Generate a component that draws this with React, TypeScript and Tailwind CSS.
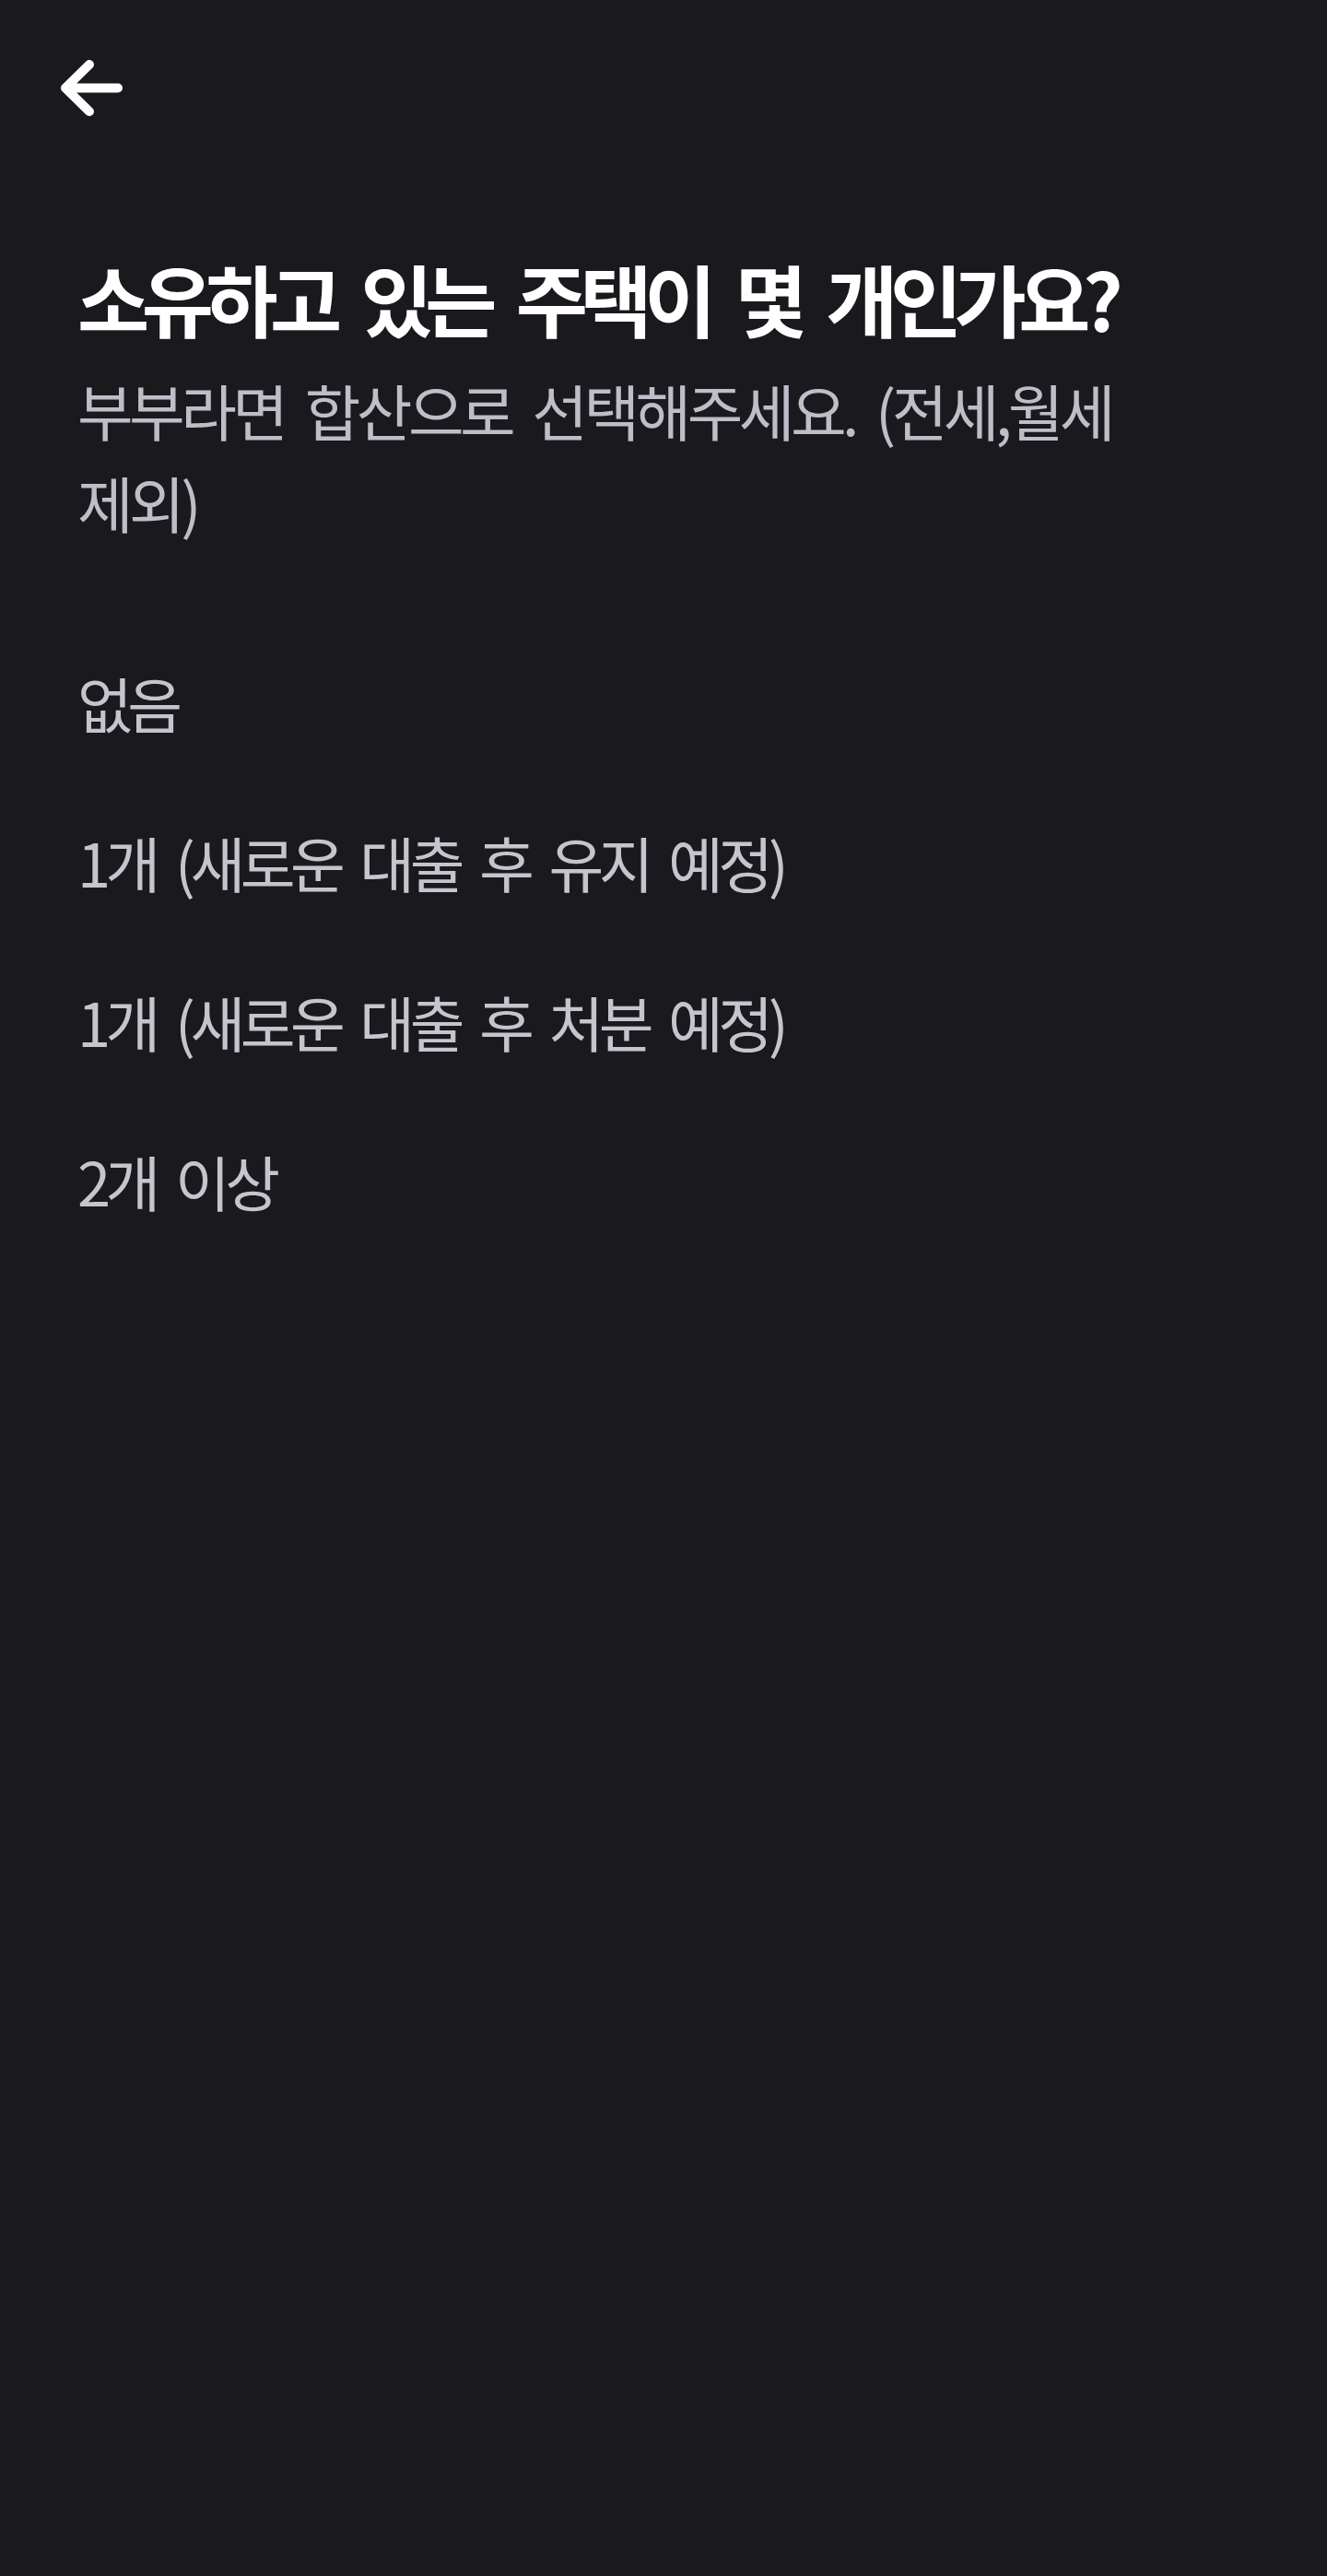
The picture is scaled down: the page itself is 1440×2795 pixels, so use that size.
import React from "react";

const options = [
  "없음",
  "1개 (새로운 대출 후 유지 예정)",
  "1개 (새로운 대출 후 처분 예정)",
  "2개 이상",
];

export default function App() {
  return (
    <div
      className="min-h-screen w-full bg-[#19191e] text-white"
      style={{ fontFamily: '"Noto Sans CJK KR", "Noto Sans", sans-serif' }}
    >
      <header className="pt-[60px] pl-[61px]">
        <button type="button" aria-label="뒤로 가기" className="block">
          <svg width="76" height="70" viewBox="0 0 76 70" fill="none">
            <path
              d="M36 10 L10 35.5 L36 61 M10 35.5 H67"
              stroke="white"
              strokeWidth="10"
              strokeLinecap="round"
              strokeLinejoin="round"
            />
          </svg>
        </button>
      </header>

      <main className="px-[84px]">
        <h1 className="mt-[140px] text-[85px] font-bold leading-[106px] tracking-[-8.5px] [word-spacing:18px] text-white whitespace-nowrap">
          소유하고 있는 주택이 몇 개인가요?
        </h1>
        <p className="mt-[18px] text-[66px] leading-[100px] tracking-[-4.6px] [word-spacing:12px] text-[#bdbec7] whitespace-nowrap">
          부부라면 합산으로 선택해주세요. (전세,월세
          <br />
          제외)
        </p>

        <ul className="mt-[82px] flex flex-col">
          {options.map((o) => (
            <li
              key={o}
              className="h-[173px] flex items-center text-[65px] tracking-[-5.5px] [word-spacing:12px] text-[#c4c5cd] whitespace-nowrap"
            >
              {o}
            </li>
          ))}
        </ul>
      </main>
    </div>
  );
}
